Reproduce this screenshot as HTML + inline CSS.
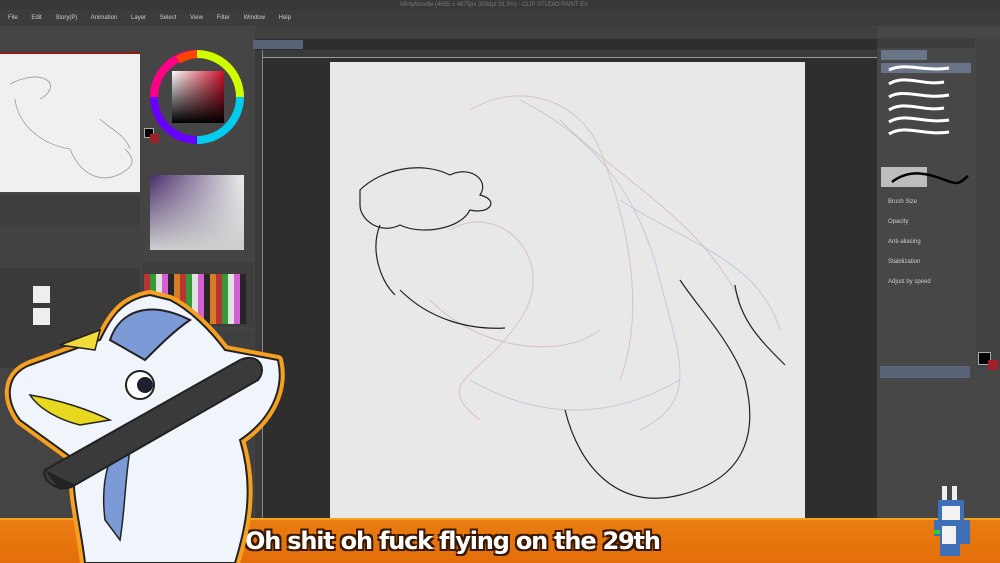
<!DOCTYPE html>
<html><head><style>
*{margin:0;padding:0;box-sizing:border-box}
body{width:1000px;height:563px;overflow:hidden;background:#2e2e2e;font-family:"Liberation Sans",sans-serif;position:relative;font-size:6px;color:#bbb}
.a{position:absolute}
</style></head><body>
<div class="a" style="left:0;top:0;width:1000px;height:10px;background:#383838"></div>
<div class="a" style="left:0;top:10px;width:1000px;height:16px;background:#3c3c3c;color:#ccc;font-size:6px;padding:5px 0 0 8px;word-spacing:12px">File Edit Story(P) Animation Layer Select View Filter Window Help</div>
<div class="a" style="left:400px;top:2px;color:#777;font-size:6px">MintyNoodle (4655 x 4875px 300dpi 33.3%) - CLIP STUDIO PAINT EX</div>
<div class="a" style="left:0;top:26px;width:255px;height:495px;background:#444"></div>
<div class="a" style="left:0;top:52px;width:140px;height:140px;background:#f0f0f0;border-top:2px solid #8b1a1a"></div>
<svg class="a" style="left:0;top:54px" width="140" height="138" fill="none" stroke="#999" stroke-width=".8"><path d="M10 30C20 25 35 20 45 25S50 40 40 45"/><path d="M15 45C18 70 40 90 70 95"/><path d="M100 65C110 75 125 80 130 95"/><path d="M70 95C80 120 100 130 120 120S130 100 125 95"/></svg>
<div class="a" style="left:0;top:195px;width:140px;height:30px;background:#3e3e3e"></div>
<div class="a" style="left:0;top:225px;width:140px;height:45px;background:#424242"></div>
<div class="a" style="left:0;top:268px;width:140px;height:100px;background:#3a3a3a"></div>
<div class="a" style="left:33px;top:286px;width:17px;height:17px;background:#eee"></div>
<div class="a" style="left:33px;top:308px;width:17px;height:17px;background:#eee"></div>
<div class="a" style="left:142px;top:36px;width:112px;height:120px;background:#454545"></div>
<svg class="a" style="left:148px;top:48px" width="98" height="98" viewBox="0 0 98 98">
<defs><linearGradient id="s" x1="0" y1="0" x2="1" y2="0"><stop offset="0" stop-color="#fff"/><stop offset="1" stop-color="#d0102a"/></linearGradient><linearGradient id="k" x1="0" y1="0" x2="0" y2="1"><stop offset="0" stop-color="#000" stop-opacity="0"/><stop offset="1" stop-color="#000"/></linearGradient></defs>
<circle cx="49" cy="49" r="43" fill="none" stroke="#f00" stroke-width="8"/>
<path d="M49 6A43 43 0 0 1 92 49" fill="none" stroke="#cf0" stroke-width="8"/>
<path d="M92 49A43 43 0 0 1 49 92" fill="none" stroke="#0ce" stroke-width="8"/>
<path d="M49 92A43 43 0 0 1 6 49" fill="none" stroke="#60f" stroke-width="8"/>
<path d="M6 49A43 43 0 0 1 49 6" fill="none" stroke="#f08" stroke-width="8"/>
<path d="M30 12A43 43 0 0 1 49 6" fill="none" stroke="#f40" stroke-width="8"/>
<rect x="24" y="23" width="52" height="52" fill="url(#s)"/><rect x="24" y="23" width="52" height="52" fill="url(#k)"/>
</svg>
<div class="a" style="left:144px;top:128px;width:10px;height:10px;background:#000;border:1px solid #aaa"></div>
<div class="a" style="left:150px;top:134px;width:9px;height:9px;background:#a0202a"></div>
<div class="a" style="left:142px;top:160px;width:112px;height:100px;background:#444"></div>
<div class="a" style="left:150px;top:175px;width:94px;height:75px;background:linear-gradient(to bottom,rgba(255,255,255,0),#ddd),linear-gradient(to right,#4a2a70,#fff);opacity:.9"></div>
<div class="a" style="left:142px;top:262px;width:112px;height:65px;background:#3e3e3e"></div>
<div class="a" style="left:144px;top:274px;width:102px;height:50px;background:repeating-linear-gradient(90deg,#c33 0 6px,#3a3 6px 12px,#fff 12px 18px,#e6e 18px 24px,#222 24px 30px,#e82 30px 36px);opacity:.85"></div>
<div class="a" style="left:142px;top:330px;width:112px;height:190px;background:#404040"></div>
<div class="a" style="left:255px;top:26px;width:622px;height:13px;background:#404040"></div>
<div class="a" style="left:253px;top:40px;width:50px;height:9px;background:#5a6478"></div>
<div class="a" style="left:262px;top:50px;width:615px;height:8px;background:#3a3a3a;border-bottom:1px solid #999"></div>
<div class="a" style="left:255px;top:50px;width:8px;height:470px;background:#3a3a3a;border-right:1px solid #888"></div>
<div class="a" style="left:330px;top:62px;width:475px;height:460px;background:#e8e8e8"></div>
<svg class="a" style="left:330px;top:62px" width="475" height="460" viewBox="330 62 475 460" fill="none">
<g stroke="#d6b8b8" stroke-width="1" opacity=".8">
<path d="M470 110C520 80 580 100 600 150S650 300 620 380"/><path d="M450 230C500 200 560 260 520 320S430 380 480 420"/><path d="M560 120C620 180 700 220 740 300"/><path d="M430 300C480 350 560 360 600 330"/></g>
<g stroke="#b8c4d8" stroke-width="1" opacity=".8">
<path d="M520 100C600 140 640 200 660 280S700 400 640 430"/><path d="M470 380C540 420 610 420 680 380"/><path d="M620 200C680 240 760 260 780 330"/></g>
<g stroke="#222" stroke-width="1.2">
<path d="M360 190C380 170 420 160 450 175C470 165 490 180 480 195C500 200 490 215 470 210C460 230 420 235 400 225C380 235 360 220 360 205Z"/>
<path d="M380 225C370 250 380 280 395 295"/><path d="M400 290C430 320 470 330 505 328"/>
<path d="M680 280C700 310 730 340 745 380"/><path d="M735 285C740 320 760 340 785 365"/>
<path d="M565 410C580 470 620 510 680 495S760 440 745 380"/></g>
</svg>
<div class="a" style="left:877px;top:26px;width:123px;height:494px;background:#474747"></div>
<div class="a" style="left:877px;top:38px;width:98px;height:10px;background:#3c3c3c"></div>
<div class="a" style="left:881px;top:50px;width:46px;height:10px;background:#6a7488"></div>
<div class="a" style="left:881px;top:63px;width:90px;height:10px;background:#6a7488"></div>
<svg class="a" style="left:884px;top:62px" width="75" height="80" stroke="#fff" fill="none" stroke-width="3"><path d="M5 8C20 0 40 10 65 6"/><path d="M5 22C20 12 40 24 60 20"/><path d="M5 35C20 26 40 38 65 33"/><path d="M5 48C20 38 40 50 60 46"/><path d="M5 60C20 50 40 62 65 58"/><path d="M5 72C20 62 40 74 65 70"/></svg>
<div class="a" style="left:881px;top:167px;width:46px;height:20px;background:#bdbdbd"></div>
<svg class="a" style="left:890px;top:168px" width="80" height="20"><path d="M2 14C20 0 40 6 55 12S70 14 78 8" stroke="#000" stroke-width="2.5" fill="none"/></svg>
<div class="a" style="left:880px;top:192px;width:88px;height:110px;color:#ccc;font-size:6px;line-height:20px;padding-left:8px">Brush Size<br>Opacity<br>Anti-aliasing<br>Stabilization<br>Adjust by speed</div>
<div class="a" style="left:880px;top:366px;width:90px;height:12px;background:#5a6478"></div>
<div class="a" style="left:976px;top:38px;width:24px;height:330px;background:#434343"></div>
<div class="a" style="left:978px;top:352px;width:13px;height:13px;background:#000;border:1px solid #aaa"></div>
<div class="a" style="left:988px;top:360px;width:10px;height:10px;background:#a0202a"></div>
<div class="a" style="left:0;top:518px;width:1000px;height:45px;background:linear-gradient(#f7a020 0 2px,#e97d12 2px,#e46e0a)"></div>
<div class="a" style="left:245px;top:527px;font-family:'DejaVu Sans','Liberation Sans',sans-serif;font-weight:bold;font-size:24px;color:#fff;letter-spacing:-1.2px;text-shadow:0 0 2px #3a1a00,2px 2px 0 #3a1a00,-2px -2px 0 #3a1a00,2px -2px 0 #3a1a00,-2px 2px 0 #3a1a00">Oh shit oh fuck flying on the 29th</div>
<svg class="a" style="left:0;top:290px" width="290" height="273" viewBox="0 290 290 273">
<path d="M85 563C80 520 70 490 75 460L20 420C5 400 5 375 30 365L100 340C110 320 120 300 150 295L170 300C190 310 210 330 225 350L278 360C285 390 270 420 240 440C255 490 245 530 235 563Z" fill="#f0f4fb" stroke="#f5a020" stroke-width="10" stroke-linejoin="round"/>
<path d="M85 563C80 520 70 490 75 460L20 420C5 400 5 375 30 365L100 340C110 320 120 300 150 295L170 300C190 310 210 330 225 350L278 360C285 390 270 420 240 440C255 490 245 530 235 563Z" fill="#f0f4fb" stroke="#222" stroke-width="2"/>
<path d="M110 340C120 310 150 300 190 320C175 330 160 345 145 360Z" fill="#7b9ad6" stroke="#222" stroke-width="2"/>
<path d="M105 520C100 480 110 455 120 440L130 450C125 480 125 510 120 540Z" fill="#7b9ad6" stroke="#222" stroke-width="1.5"/>
<path d="M60 345L100 330L95 350Z" fill="#f2dc3a" stroke="#222" stroke-width="1.5"/>
<path d="M30 395C60 400 90 410 110 420L80 425C60 420 40 410 30 395Z" fill="#e8d820" stroke="#222" stroke-width="1.5"/>
<circle cx="140" cy="385" r="14" fill="#fff" stroke="#222" stroke-width="2"/><circle cx="145" cy="385" r="8" fill="#1e2030"/>
<path d="M45 470L240 360C258 352 268 368 258 380L75 485C60 495 40 480 45 470Z" fill="#3a3a3a" stroke="#222" stroke-width="2"/>
<path d="M45 470L75 485L60 490Z" fill="#222"/>
</svg>
<svg class="a" style="left:920px;top:484px" width="60" height="76"><path d="M22 2h5v14h-5zM32 2h5v14h-5z" fill="#eee"/><path d="M18 16h26v20h6v24h-10v12h-20v-20h-6v-16h4z" fill="#3e70b8"/><path d="M22 22h18v14h-18zM22 42h14v18h-14z" fill="#f2f2f2"/><rect x="14" y="46" width="6" height="4" fill="#3c3"/></svg>
</body></html>
